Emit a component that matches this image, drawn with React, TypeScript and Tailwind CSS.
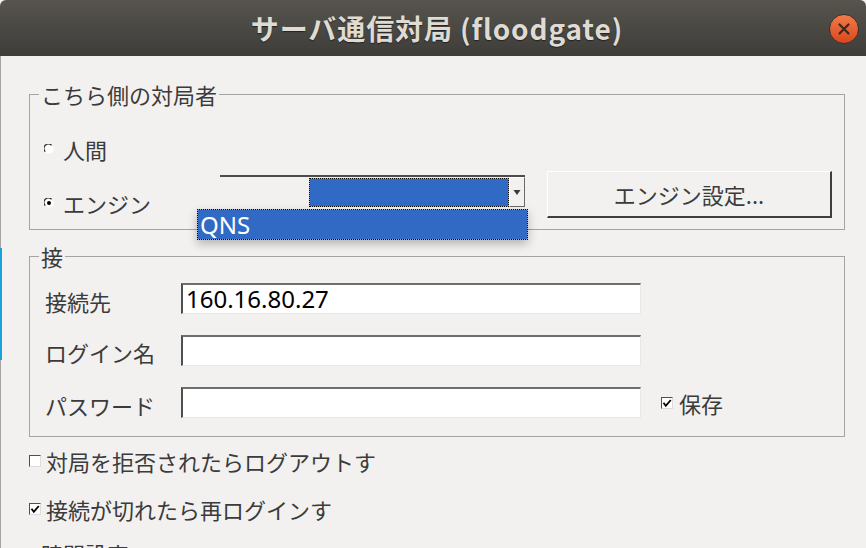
import React from 'react';

const jp = "font-['Noto_Sans_CJK_JP','Noto_Sans',sans-serif]";

function Radio({ checked }: { checked?: boolean }) {
  return (
    <svg width="10" height="10" viewBox="0 0 10 10" className="shrink-0">
      <circle cx="5" cy="5" r="4.5" fill="#fff" />
      <path d="M1.3 7.6 A4.2 4.2 0 0 1 7.6 1.3" stroke="#2e2e2e" strokeWidth="1.3" fill="none" />
      {checked && <circle cx="5" cy="5" r="2" fill="#000" />}
    </svg>
  );
}

function Check({ checked }: { checked?: boolean }) {
  return (
    <span className="w-[12px] h-[12px] shrink-0 bg-white border-t border-l border-t-[#505050] border-l-[#505050] border-b border-r border-b-[#dcdcdc] border-r-[#dcdcdc] flex items-center justify-center">
      {checked && (
        <svg width="10" height="10" viewBox="0 0 10 10">
          <path d="M1.5 4.8 L3.8 7.8 L8.8 2" stroke="#000" strokeWidth="1.8" fill="none" />
        </svg>
      )}
    </span>
  );
}

function Field({ value }: { value?: string }) {
  return (
    <div className="w-[460px] h-[31px] bg-white border-t-2 border-l-2 border-t-[#6e6e6e] border-l-[#505050] border-b border-r border-b-[#e8e8e8] border-r-[#e8e8e8] flex items-center pl-[3px] text-[24px] leading-none text-black font-['Noto_Sans',sans-serif]">
      {value}
    </div>
  );
}

export default function App() {
  return (
    <div className={`w-[866px] h-[548px] overflow-hidden bg-[#f2f1f0] relative ${jp}`}>
      {/* Title Bar */}
      <div className="h-[56px] rounded-t-[6px] bg-gradient-to-b from-[#57544e] to-[#3e3d39] flex items-center justify-center relative">
        <span className="text-[28px] font-bold text-[#dfdbd2] tracking-[0.9px] [text-shadow:0_1px_1px_#222] ml-[8px]">
          サーバ通信対局 (floodgate)
        </span>
        <div className="absolute right-[7px] top-[14px] w-[30px] h-[30px] rounded-full bg-gradient-to-b from-[#f37a4a] to-[#d9461a] border border-[#3a332c] flex items-center justify-center">
          <svg width="14" height="14" viewBox="0 0 14 14">
            <path d="M2.5 2.5 L11.5 11.5 M11.5 2.5 L2.5 11.5" stroke="#3b2a1c" strokeWidth="2.2" strokeLinecap="round" />
          </svg>
        </div>
      </div>

      {/* left edge */}
      <div className="absolute left-0 top-[56px] bottom-0 w-[1px] bg-[#a4a4a4]" />
      <div className="absolute left-0 top-[248px] w-[2px] h-[112px] bg-[#1aa0dc]" />

      {/* Body */}
      <div className="pl-[29px] pr-[21px] pt-[26px] text-[#3b3b3b]">
        {/* Group 1 */}
        <fieldset className="border border-[#a4a4a4]">
          <legend className="ml-[9px] px-[2px] text-[22px] leading-[24px]">こちら側の対局者</legend>
          <div className="pl-[14px] pr-[12px] pb-[11px]">
            <div className="mt-[30px] flex items-center gap-[9px] text-[22px] leading-[26px]">
              <Radio />
              <span>人間</span>
            </div>
            <div className="mt-[9px] flex items-start">
              <div className="mt-[19px] w-[176px] flex items-center gap-[9px] text-[22px] leading-[26px]">
                <Radio checked />
                <span>エンジン</span>
              </div>
              <div className="mt-[4px] w-[305px] border-t-2 border-t-[#4c4c4c] flex relative">
                <div className="w-[89px]" />
                <div className="w-[200px] h-[29px] mt-[1px] border border-dotted border-black bg-[#f0a030]">
                  <div className="w-full h-full bg-[#316ac5]" />
                </div>
                <div className="w-[16px] h-[30px] border-t border-l border-white border-r border-b border-r-[#6a6a6a] border-b-[#6a6a6a] bg-[#f2f1f0] flex items-center justify-center">
                  <svg width="8" height="8" viewBox="0 0 8 8">
                    <path d="M0.5 2 H7.5 L4 7 Z" fill="#3a3a3a" />
                  </svg>
                </div>
                {/* Dropdown list */}
                <div className="absolute left-[-23px] top-[32px] w-[331px] h-[31px] border border-dotted border-black bg-[#f0a030] shadow-[0_4px_10px_rgba(0,0,0,0.25)] z-10">
                  <div className="w-full h-full bg-[#316ac5] text-white text-[24px] leading-[29px] pl-[2px] font-['Noto_Sans',sans-serif]">
                    QNS
                  </div>
                </div>
              </div>
              <button className="ml-[22px] w-[285px] h-[47px] bg-[#f2f1f0] border-t border-l border-white border-r-2 border-b-2 border-r-[#3e3e3e] border-b-[#3e3e3e] text-[22px] text-[#3b3b3b] leading-none">
                エンジン設定...
              </button>
            </div>
          </div>
        </fieldset>

        {/* Group 2 */}
        <fieldset className="mt-[14px] border border-[#a4a4a4]">
          <legend className="ml-[9px] px-[2px] text-[22px] leading-[24px]">接</legend>
          <div className="pl-[15px] pr-[12px] pb-[18px] mt-[15px] flex flex-col gap-[21px] text-[22px] leading-[26px]">
            <div className="flex items-center">
              <span className="w-[136px] pt-[4px]">接続先</span>
              <Field value="160.16.80.27" />
            </div>
            <div className="flex items-center">
              <span className="w-[136px] pt-[2px]">ログイン名</span>
              <Field />
            </div>
            <div className="flex items-center">
              <span className="w-[136px] pt-[4px]">パスワード</span>
              <Field />
              <div className="ml-[20px] flex items-center gap-[6px]">
                <Check checked />
                <span>保存</span>
              </div>
            </div>
          </div>
        </fieldset>

        {/* Options */}
        <div className="mt-[11px] flex items-center gap-[5px] text-[22px] leading-[26px]">
          <Check />
          <span>対局を拒否されたらログアウトす</span>
        </div>
        <div className="mt-[22px] flex items-center gap-[5px] text-[22px] leading-[26px]">
          <Check checked />
          <span>接続が切れたら再ログインす</span>
        </div>

        {/* Group 3 (cut off by window edge) */}
        <fieldset className="mt-[19px] border border-[#a4a4a4] h-[80px]">
          <legend className="ml-[9px] px-[2px] text-[22px] leading-[24px]">時間設定</legend>
        </fieldset>
      </div>
    </div>
  );
}
